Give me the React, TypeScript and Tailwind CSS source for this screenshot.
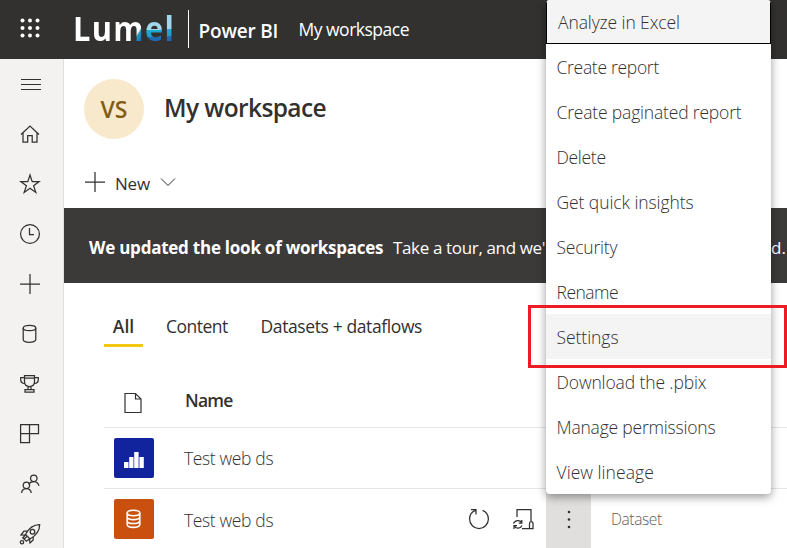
import type { ReactNode } from "react";

const MENU = [
  { label: "Create report", cls: "tracking-[-0.3px]" },
  { label: "Create paginated report", cls: "tracking-[-0.18px]" },
  { label: "Delete", cls: "tracking-[-0.3px]" },
  { label: "Get quick insights", cls: "tracking-[-0.08px]" },
  { label: "Security", cls: "tracking-[-0.2px]" },
  { label: "Rename", cls: "tracking-[-0.5px]" },
  { label: "Settings", cls: "tracking-[-0.05px] bg-[#f4f4f4]" },
  { label: "Download the .pbix", cls: "tracking-[-0.12px]" },
  { label: "Manage permissions", cls: "tracking-[-0.2px]" },
  { label: "View lineage", cls: "tracking-[0.05px]" },
];

function Icon({ children, size = 22 }: { children: ReactNode; size?: number }) {
  return (
    <svg width={size} height={size} viewBox="0 0 22 22" fill="none" stroke="#323130" strokeWidth="1.25" className="shrink-0">
      {children}
    </svg>
  );
}

const NAV: ReactNode[] = [
  <path d="M2 6.5H22M2 11.5H22M2 16.5H22" strokeWidth="1" />,
  <path d="M2 11.5L11 3L20 11.5M4 10V19.2H8.7V12.5H13.2V19.2H18V10" />,
  <path d="M11 2L13.2 8.6H20.2L14.6 12.7L16.8 19.4L11 15.3L5.2 19.4L7.4 12.7L1.8 8.6H8.8Z" />,
  <><circle cx="11" cy="11" r="9.4" /><path d="M10.5 5V11.5H15" /></>,
  <path d="M11 1V21M1 11H21" />,
  <><ellipse cx="10.5" cy="5" rx="6.3" ry="2.7" /><path d="M4.2 5V16.5C4.2 20.2 16.8 20.2 16.8 16.5V5" /></>,
  <path d="M5.5 2.5H15.5V8.5C15.5 12 13 13.5 10.5 13.5S5.5 12 5.5 8.5ZM5.5 4.5H1.7V6.5C1.7 9 3.5 10.5 6 10.5M15.5 4.5H19.3V6.5C19.3 9 17.5 10.5 15 10.5M5.5 5H15.5M9 13.5V16.5H12V13.5M6 19V16.5H15V19Z" />,
  <path d="M1.6 1.5H19.5V10.5H1.6ZM10.5 1.5V19.5H1.6V10.5" />,
  <><circle cx="14.8" cy="5.3" r="3.2" /><circle cx="7.4" cy="12.3" r="3.2" /><path d="M9.7 11.6C11.5 7.4 18.5 7.4 20 12.8M2.5 20C3.3 14 11.5 14 12.3 20" /></>,
  <><path d="M20.7 1.5C15 1.5 9.5 5.5 6.5 11.5L11 16C17 12.5 20.7 7.5 20.7 1.5ZM8.5 8.2H5L2 12L6.5 12.2M14.2 14V17L11 20L10.5 16" /><circle cx="13.5" cy="8.7" r="2.3" /><circle cx="3" cy="19.2" r="1.7" /><path d="M6.3 12L3.7 15L7.5 18.2L10.5 15.7M5 16L8 13.5" /></>,
];

function Header() {
  return (
    <header className="flex h-[59px] shrink-0 items-start bg-[#323130] text-white">
      <svg width="20" height="20" className="mt-[18px] ml-[19.5px] shrink-0" fill="white">
        {[2.5, 10, 17.5].map((y) => [2.5, 10, 17.5].map((x) => <circle key={`${x}-${y}`} cx={x} cy={y} r="2" />))}
      </svg>
      <div className="mt-[5px] ml-[33.5px] w-[114.5px] shrink-0">
        <div className="flex origin-left scale-x-[0.905] text-[34px] leading-[46px] font-bold">
          <span className="tracking-[1.5px]">Lu</span>
          <span className="bg-[linear-gradient(125deg,#fff_70%,#1ea4cf_71%,#1f6cb4_82%)] bg-clip-text tracking-[1.5px] text-transparent">m</span>
          <span className="bg-[linear-gradient(178deg,#9fd8ea_53%,#1eaad2_54%,#1c9ccc_68%,#1f6bb3_69%)] bg-clip-text tracking-[1.5px] text-transparent">el</span>
        </div>
      </div>
      <div className="mt-[10px] h-[38px] w-px shrink-0 bg-white" />
      <span className="mt-[18px] ml-[10px] w-[100px] text-[19px] leading-[26px] font-semibold tracking-[-0.2px] whitespace-nowrap">Power BI</span>
      <span className="mt-[16px] text-[17.5px] leading-[26px] tracking-[-0.5px] whitespace-nowrap">My workspace</span>
    </header>
  );
}

function RowIcon({ kind }: { kind: "report" | "dataset" }) {
  return kind === "report" ? (
    <div className="flex size-10 shrink-0 items-center justify-center rounded-[2px] bg-[#12239e]">
      <svg width="20" height="18" className="mt-1 -ml-px" fill="#fff"><path d="M0 11H4.5V17H0ZM5.2 6H9.5V17H5.2ZM10.2 1H14.6V17H10.2ZM15.4 6H19.8V17H15.4Z" /></svg>
    </div>
  ) : (
    <div className="flex size-10 shrink-0 items-center justify-center rounded-[2px] bg-[#ca5010]">
      <svg width="16" height="20" fill="none" stroke="#fff" strokeWidth="1.6"><ellipse cx="7.5" cy="4" rx="6.3" ry="2.7" /><path d="M1.2 4V15.5C1.2 19.3 13.8 19.3 13.8 15.5V4M1.2 8C1.2 11.5 13.8 11.5 13.8 8M1.2 12C1.2 15.4 13.8 15.4 13.8 12" /></svg>
    </div>
  );
}

export default function App() {
  return (
    <div className="relative flex h-[548px] w-[787px] flex-col overflow-hidden bg-white font-['Open_Sans','Noto_Sans',sans-serif] text-[#323130]">
      <Header />
      <div className="flex min-h-0 flex-1">
        <nav className="flex w-16 shrink-0 flex-col border-r border-[#e1dfdd] bg-[#f3f2f1]">
          {NAV.map((icon, i) => (
            <div key={i} className="flex h-[50px] shrink-0 items-center pl-[19px]"><Icon>{icon}</Icon></div>
          ))}
        </nav>
        <main className="flex min-w-0 flex-1 flex-col">
          <div className="flex h-[149px] shrink-0 flex-col pl-5">
            <div className="mt-5 flex h-[60px] items-center">
              <div className="flex size-[60px] items-center justify-center rounded-full bg-[#f8e9cd] text-[23px] font-semibold text-[#835c13]">VS</div>
              <h1 className="-mt-[2px] ml-5 text-[24.5px] leading-none font-semibold tracking-[-0.6px]">My workspace</h1>
            </div>
            <div className="mt-[31px] flex h-6 items-center">
              <Icon>{NAV[4]}</Icon>
              <span className="mt-[3px] ml-[9px] w-[45px] text-[17px] tracking-[-0.2px]">New</span>
              <svg width="16" height="10" fill="none" stroke="#323130"><path d="M1 1.5L8 8.5L15 1.5" /></svg>
            </div>
          </div>
          <div className="flex h-[75px] shrink-0 items-center bg-[#3b3a39] pt-[5px] pl-[25px] text-[17px] whitespace-nowrap text-white">
            <strong className="w-[304px] shrink-0 tracking-[-0.24px]">We updated the look of workspaces</strong>
            <span className="w-[378px] shrink-0 tracking-[-0.35px]">Take a tour, and we'</span>
            <span>d.</span>
          </div>
          <div className="flex h-16 shrink-0 items-end pl-10 text-[17.5px] leading-6">
            <div className="mr-[23px] h-[33px] w-[39px] border-b-[3px] border-[#f2c811] text-center font-semibold">All</div>
            <div className="h-[33px] w-[94.5px] tracking-[-0.5px]">Content</div>
            <div className="h-[33px] tracking-[-0.39px]">Datasets + dataflows</div>
          </div>
          <div className="ml-10 flex flex-1 flex-col text-[17.5px]">
            <div className="flex h-[81px] shrink-0 items-end border-b border-[#e8e7e6] pb-[14px] pl-[20px]">
              <svg width="18" height="22" className="mr-[43px] -mb-px" fill="none" stroke="#323130" strokeWidth="1.2"><path d="M1 1.5H11.5L17 7V20.5H1ZM11.5 1.5V7H17" /></svg>
              <span className="mb-px leading-6 font-semibold tracking-[-0.8px]">Name</span>
            </div>
            <div className="flex h-[61px] shrink-0 items-center border-b border-[#e8e7e6] pl-[10px]">
              <RowIcon kind="report" />
              <span className="ml-[30px] font-[350] tracking-[-0.36px]">Test web ds</span>
            </div>
            <div className="flex h-[60px] shrink-0 items-center pl-[10px]">
              <RowIcon kind="dataset" />
              <span className="mt-[2px] ml-[30px] w-[284px] shrink-0 font-[350] tracking-[-0.36px]">Test web ds</span>
              <Icon>
                <path d="M7.5 2.3C4 3.5 1.6 7 1.6 11C1.6 16.2 5.8 20.5 11 20.5S20.4 16.2 20.4 11C20.4 7 18 3.7 14.5 2.3M3 1.5H8V6.5" />
              </Icon>
              <div className="ml-[22px] w-[34px] shrink-0">
                <Icon>
                  <path d="M5 9V1.5H19V14M10 20.5H21V15.5Q21 13.5 19 13.5Q17.5 13.5 17.5 15.5V20.5M1.5 15.5C3 11.5 8.5 12 9.5 14.5M9.8 12V15.2H6.8M10 17.5C8.5 21 4 21 2.5 18M2 21V17.5H5" />
                </Icon>
              </div>
              <div className="flex h-full w-[45px] shrink-0 items-center justify-center bg-[#e1dfdd]">
                <svg width="4" height="20" fill="#323130"><circle cx="2" cy="3" r="1.3" /><circle cx="2" cy="10.5" r="1.3" /><circle cx="2" cy="18" r="1.3" /></svg>
              </div>
              <span className="mt-px ml-5 text-[15.5px] font-[350] tracking-[-0.4px] text-[#605e5c]">Dataset</span>
            </div>
          </div>
        </main>
      </div>
      <div className="absolute top-0 left-[546px] h-[494px] w-[225px] overflow-hidden rounded-[4px] bg-white text-[17.5px] font-[350] shadow-[0_3px_10px_rgba(0,0,0,0.4)]">
        <div className="flex h-11 items-center border border-t-0 border-black bg-[#f4f4f4] pt-[2px] pl-[11px] tracking-[-0.1px]">Analyze in Excel</div>
        <div className="flex flex-col">
          {MENU.map((m) => (
            <div key={m.label} className={`flex h-[45px] items-center pt-px pl-[10.5px] whitespace-nowrap ${m.cls}`}>{m.label}</div>
          ))}
        </div>
      </div>
      <div className="absolute top-[305px] left-[528px] h-[63px] w-[259px] border-[3px] border-[#ed1c24]" />
    </div>
  );
}
